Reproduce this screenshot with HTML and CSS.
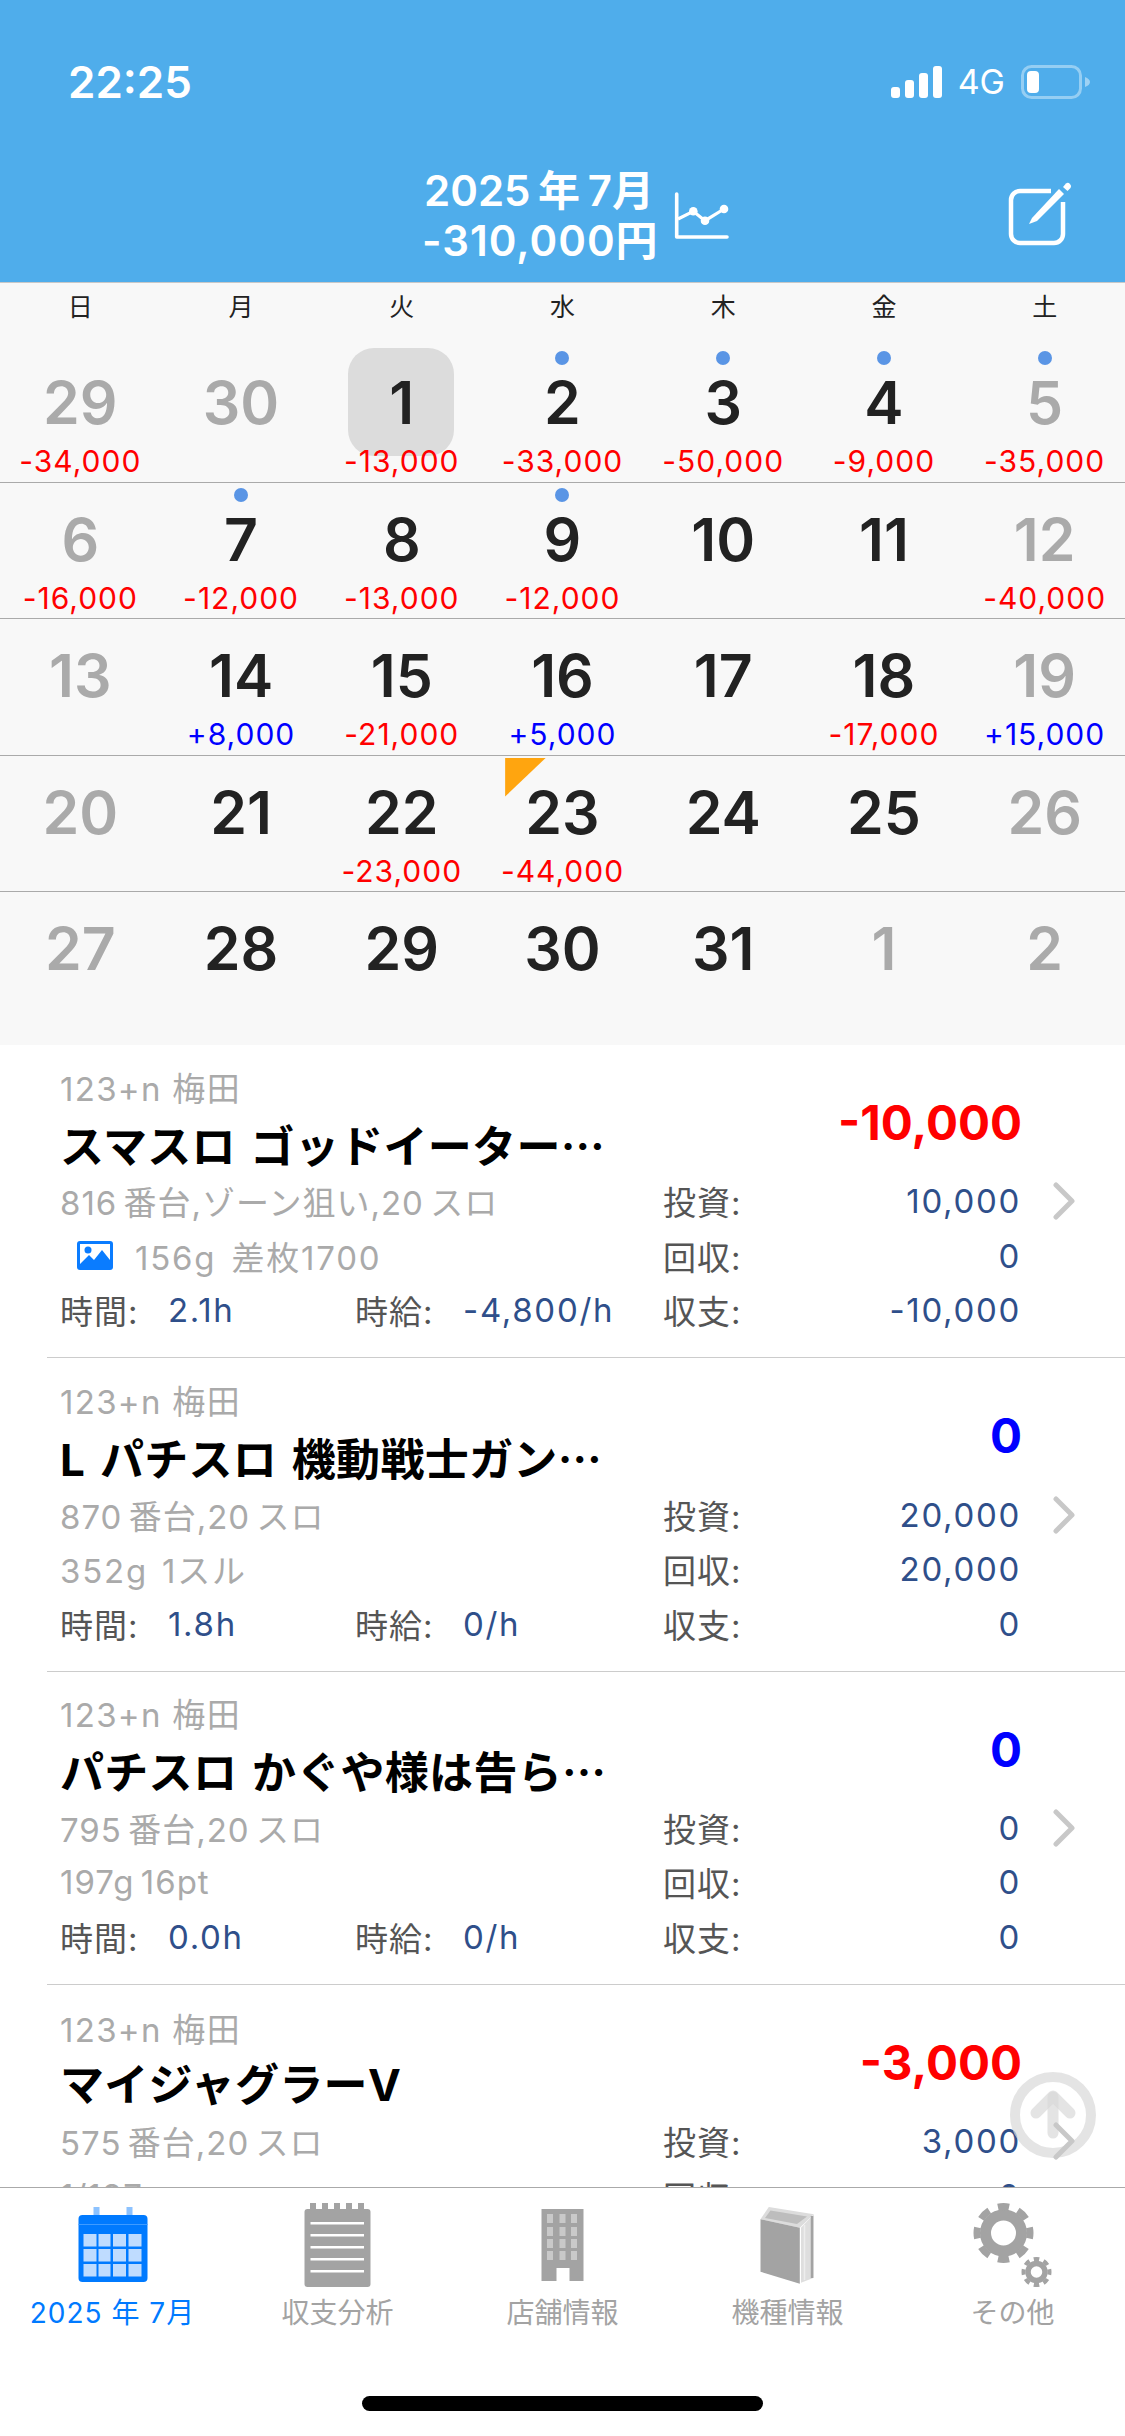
FILE: index.html
```html
<!DOCTYPE html>
<html lang="ja">
<head>
<meta charset="utf-8">
<title>カレンダー</title>
<link rel="stylesheet" href="styles.css">
</head>
<body>
<div class="app">
  <header class="header">
    <div class="status">
      <span class="time">22:25</span>
      <div class="status-right">
        <svg class="signal" width="51" height="32" viewBox="0 0 51 32"><rect x="0" y="21" width="9" height="11" rx="3"/><rect x="14" y="14" width="9" height="18" rx="3"/><rect x="28" y="7" width="9" height="25" rx="3"/><rect x="42" y="0" width="9" height="32" rx="3"/></svg>
        <span class="net">4G</span>
        <svg class="battery" width="70" height="34" viewBox="0 0 70 34"><rect x="1.500" y="1.500" width="58" height="31" rx="9" fill="none" stroke="#fff" stroke-opacity=".4" stroke-width="3"/><rect x="6" y="6" width="12" height="22" rx="4" fill="#fff"/><path d="M64 12c3 1 5 3 5 5s-2 4-5 5z" fill="#fff" fill-opacity=".45"/></svg>
      </div>
    </div>
    <div class="nav">
      <div class="nav-title"><div class="nav-month">2025 年 7月</div><div class="nav-sum">-310,000円</div></div>
      <svg class="chart" width="60" height="52" viewBox="0 0 60 52" fill="none" stroke="#fff"><path d="M4.700 5V48H55" stroke-width="3.600" stroke-linecap="round" stroke-linejoin="round"/><path d="M6 30 21.300 22.300 33 31.700 52 20" stroke-width="3.200"/><g fill="#fff" stroke="none"><circle cx="21.300" cy="22.300" r="4.300"/><circle cx="33" cy="31.700" r="4.300"/><circle cx="52" cy="20" r="4.300"/></g></svg>
      <svg class="edit" width="70" height="70" viewBox="0 0 70 70" fill="none"><path d="M46 13H15a9 9 0 0 0-9 9V56a9 9 0 0 0 9 9H49a9 9 0 0 0 9-9V24" stroke="#fff" stroke-width="4.500"/><path d="M24 46 27 40 54 11 59 16 32 43Z" fill="#fff"/><path d="M58 9 61 5.500Q63 4 65 6 67 8 65.500 10L62.500 13Z" fill="#fff"/></svg>
    </div>
  </header>

  <section class="calendar">
    <div class="weekdays"><span>日</span><span>月</span><span>火</span><span>水</span><span>木</span><span>金</span><span>土</span></div>
    <div class="week">
      <div class="day muted"><i class="dot none"></i><b>29</b><em class="neg">-34,000</em></div>
      <div class="day muted"><i class="dot none"></i><b>30</b><em></em></div>
      <div class="day today"><i class="dot none"></i><b>1</b><em class="neg">-13,000</em></div>
      <div class="day"><i class="dot"></i><b>2</b><em class="neg">-33,000</em></div>
      <div class="day"><i class="dot"></i><b>3</b><em class="neg">-50,000</em></div>
      <div class="day"><i class="dot"></i><b>4</b><em class="neg">-9,000</em></div>
      <div class="day muted"><i class="dot"></i><b>5</b><em class="neg">-35,000</em></div>
    </div>
    <div class="week">
      <div class="day muted"><i class="dot none"></i><b>6</b><em class="neg">-16,000</em></div>
      <div class="day"><i class="dot"></i><b>7</b><em class="neg">-12,000</em></div>
      <div class="day"><i class="dot none"></i><b>8</b><em class="neg">-13,000</em></div>
      <div class="day"><i class="dot"></i><b>9</b><em class="neg">-12,000</em></div>
      <div class="day"><i class="dot none"></i><b>10</b><em></em></div>
      <div class="day"><i class="dot none"></i><b>11</b><em></em></div>
      <div class="day muted"><i class="dot none"></i><b>12</b><em class="neg">-40,000</em></div>
    </div>
    <div class="week">
      <div class="day muted"><i class="dot none"></i><b>13</b><em></em></div>
      <div class="day"><i class="dot none"></i><b>14</b><em class="pos">+8,000</em></div>
      <div class="day"><i class="dot none"></i><b>15</b><em class="neg">-21,000</em></div>
      <div class="day"><i class="dot none"></i><b>16</b><em class="pos">+5,000</em></div>
      <div class="day"><i class="dot none"></i><b>17</b><em></em></div>
      <div class="day"><i class="dot none"></i><b>18</b><em class="neg">-17,000</em></div>
      <div class="day muted"><i class="dot none"></i><b>19</b><em class="pos">+15,000</em></div>
    </div>
    <div class="week">
      <div class="day muted"><i class="dot none"></i><b>20</b><em></em></div>
      <div class="day"><i class="dot none"></i><b>21</b><em></em></div>
      <div class="day"><i class="dot none"></i><b>22</b><em class="neg">-23,000</em></div>
      <div class="day flagged"><i class="dot none"></i><b>23</b><em class="neg">-44,000</em></div>
      <div class="day"><i class="dot none"></i><b>24</b><em></em></div>
      <div class="day"><i class="dot none"></i><b>25</b><em></em></div>
      <div class="day muted"><i class="dot none"></i><b>26</b><em></em></div>
    </div>
    <div class="week last">
      <div class="day muted"><i class="dot none"></i><b>27</b><em></em></div>
      <div class="day"><i class="dot none"></i><b>28</b><em></em></div>
      <div class="day"><i class="dot none"></i><b>29</b><em></em></div>
      <div class="day"><i class="dot none"></i><b>30</b><em></em></div>
      <div class="day"><i class="dot none"></i><b>31</b><em></em></div>
      <div class="day muted"><i class="dot none"></i><b>1</b><em></em></div>
      <div class="day muted"><i class="dot none"></i><b>2</b><em></em></div>
    </div>
  </section>

  <main class="list">
    <article class="row">
      <div class="head">
        <div class="names"><div class="store">123+n 梅田</div><div class="title">スマスロ ゴッドイーター<span class="ell">…</span></div></div>
        <div class="total neg">-10,000</div>
      </div>
      <div class="line"><div class="note">816 番台,ゾーン狙い,20 スロ</div><span class="k">投資:</span><span class="v">10,000</span><svg class="chev" width="24" height="38" viewBox="0 0 24 38" fill="none"><path d="M4 3 20 19 4 35" stroke="#c8c8c8" stroke-width="5" stroke-linecap="round" stroke-linejoin="round"/></svg></div>
      <div class="line"><div class="note with-pic"><svg class="pic" width="36" height="29" viewBox="0 0 36 29"><rect width="36" height="29" rx="3" fill="#0a7cff"/><rect x="3" y="3" width="30" height="20" fill="#fff"/><circle cx="11" cy="9" r="3.500" fill="#0a7cff"/><path d="M3 23 12 14 17 19 25 9 33 19V26H3Z" fill="#0a7cff"/></svg>156g 差枚1700</div><span class="k">回収:</span><span class="v">0</span></div>
      <div class="line"><div class="note meta"><span class="k mk">時間:</span><span class="mv a">2.1h</span><span class="k mk">時給:</span><span class="mv">-4,800/h</span></div><span class="k">収支:</span><span class="v">-10,000</span></div>
    </article>
    <article class="row">
      <div class="head">
        <div class="names"><div class="store">123+n 梅田</div><div class="title">L パチスロ 機動戦士ガン<span class="ell">…</span></div></div>
        <div class="total pos">0</div>
      </div>
      <div class="line"><div class="note">870 番台,20 スロ</div><span class="k">投資:</span><span class="v">20,000</span><svg class="chev" width="24" height="38" viewBox="0 0 24 38" fill="none"><path d="M4 3 20 19 4 35" stroke="#c8c8c8" stroke-width="5" stroke-linecap="round" stroke-linejoin="round"/></svg></div>
      <div class="line"><div class="note spaced">352g 1スル</div><span class="k">回収:</span><span class="v">20,000</span></div>
      <div class="line"><div class="note meta"><span class="k mk">時間:</span><span class="mv a">1.8h</span><span class="k mk">時給:</span><span class="mv">0/h</span></div><span class="k">収支:</span><span class="v">0</span></div>
    </article>
    <article class="row">
      <div class="head">
        <div class="names"><div class="store">123+n 梅田</div><div class="title">パチスロ かぐや様は告ら<span class="ell">…</span></div></div>
        <div class="total pos">0</div>
      </div>
      <div class="line"><div class="note">795 番台,20 スロ</div><span class="k">投資:</span><span class="v">0</span><svg class="chev" width="24" height="38" viewBox="0 0 24 38" fill="none"><path d="M4 3 20 19 4 35" stroke="#c8c8c8" stroke-width="5" stroke-linecap="round" stroke-linejoin="round"/></svg></div>
      <div class="line"><div class="note">197g 16pt</div><span class="k">回収:</span><span class="v">0</span></div>
      <div class="line"><div class="note meta"><span class="k mk">時間:</span><span class="mv a">0.0h</span><span class="k mk">時給:</span><span class="mv">0/h</span></div><span class="k">収支:</span><span class="v">0</span></div>
    </article>
    <article class="row">
      <div class="head">
        <div class="names"><div class="store">123+n 梅田</div><div class="title">マイジャグラーV</div></div>
        <div class="total neg">-3,000</div>
      </div>
      <div class="line"><div class="note">575 番台,20 スロ</div><span class="k">投資:</span><span class="v">3,000</span><svg class="chev" width="24" height="38" viewBox="0 0 24 38" fill="none"><path d="M4 3 20 19 4 35" stroke="#c8c8c8" stroke-width="5" stroke-linecap="round" stroke-linejoin="round"/></svg></div>
      <div class="line"><div class="note">1/187</div><span class="k">回収:</span><span class="v">0</span></div>
    </article>
    <svg class="to-top" width="88" height="88" viewBox="0 0 88 88" fill="none" stroke="#d8d8d8" stroke-opacity=".7" stroke-linecap="round" stroke-linejoin="round"><circle cx="44" cy="44" r="38" stroke-width="10"/><path d="M44 62V26" stroke-width="11"/><path d="M27 42 44 25 61 42" stroke-width="11"/></svg>
  </main>

  <nav class="tabs">
    <div class="tab active">
      <svg width="90" height="90" viewBox="0 0 90 90"><rect x="25.500" y="6" width="6" height="12" fill="#8cc2ff"/><rect x="58.500" y="6" width="6" height="12" fill="#8cc2ff"/><rect x="10.500" y="14" width="69" height="67" rx="4" fill="#007aff"/><rect x="10.500" y="23" width="69" height="1" fill="#3f9bff"/><g fill="#bfdcff"><rect x="15.500" y="33" width="13" height="12.500"/><rect x="30.500" y="33" width="12" height="12.500"/><rect x="45" y="33" width="13" height="12.500"/><rect x="60.500" y="33" width="13" height="12.500"/><rect x="15.500" y="48" width="13" height="12.500"/><rect x="30.500" y="48" width="12" height="12.500"/><rect x="45" y="48" width="13" height="12.500"/><rect x="60.500" y="48" width="13" height="12.500"/><rect x="15.500" y="63" width="13" height="12.500"/><rect x="30.500" y="63" width="12" height="12.500"/><rect x="45" y="63" width="13" height="12.500"/><rect x="60.500" y="63" width="13" height="12.500"/></g></svg>
      <span>2025 年 7月</span>
    </div>
    <div class="tab">
      <svg width="90" height="90" viewBox="0 0 90 90"><g fill="#a3a3a3"><rect x="17" y="2" width="6" height="8"/><rect x="29" y="2" width="6" height="8"/><rect x="41" y="2" width="6" height="8"/><rect x="53" y="2" width="6" height="8"/><rect x="65" y="2" width="6" height="8"/><rect x="11.500" y="8" width="66" height="78" rx="3"/></g><g fill="#fff"><rect x="17.500" y="21" width="53.500" height="2.500"/><rect x="17.500" y="33" width="53.500" height="2.500"/><rect x="17.500" y="45" width="53.500" height="2.500"/><rect x="17.500" y="57" width="53.500" height="2.500"/><rect x="17.500" y="69" width="53.500" height="2.500"/></g></svg>
      <span>収支分析</span>
    </div>
    <div class="tab">
      <svg width="90" height="90" viewBox="0 0 90 90"><rect x="23.500" y="8" width="42" height="72" fill="#a3a3a3"/><g fill="#c9c9c9"><rect x="29" y="13" width="6" height="9"/><rect x="41.500" y="13" width="6" height="9"/><rect x="53" y="13" width="6" height="9"/><rect x="29" y="26" width="6" height="9"/><rect x="41.500" y="26" width="6" height="9"/><rect x="53" y="26" width="6" height="9"/><rect x="29" y="38" width="6" height="9"/><rect x="41.500" y="38" width="6" height="9"/><rect x="53" y="38" width="6" height="9"/><rect x="29" y="50" width="6" height="9"/><rect x="41.500" y="50" width="6" height="9"/><rect x="53" y="50" width="6" height="9"/></g><rect x="38.500" y="67" width="13" height="13" fill="#fff"/></svg>
      <span>店舗情報</span>
    </div>
    <div class="tab">
      <svg width="90" height="90" viewBox="0 0 90 90"><path d="M17.500 18.300 25.800 6 70.800 13.300 56.800 26.700Z" fill="#dcdcdc"/><path d="M22 17 27.500 9.500 64 15.500 54 23Z" fill="#bdbdbd"/><path d="M17.500 18.300 56.800 26.700V82.700L17.500 70.700Z" fill="#a3a3a3"/><path d="M58 26.700 70.800 13.300V76.700L58 81.700Z" fill="#dedede"/><path d="M69 15V77" stroke="#a3a3a3" stroke-width="2.500"/><path d="M61.500 24V79" stroke="#ededed" stroke-width="1.500"/></svg>
      <span>機種情報</span>
    </div>
    <div class="tab">
      <svg width="90" height="90" viewBox="0 0 90 90" fill="none" stroke="#a3a3a3"><circle cx="35.500" cy="32" r="18" stroke-width="11"/><circle cx="35.500" cy="32" r="26.500" stroke-width="7" pathLength="80" stroke-dasharray="5.500 4.500" stroke-dashoffset="2.750"/><circle cx="68.500" cy="71" r="8.500" stroke-width="5.500"/><circle cx="68.500" cy="71" r="13" stroke-width="4" pathLength="80" stroke-dasharray="5.500 4.500" stroke-dashoffset="2.750"/></svg>
      <span>その他</span>
    </div>
  </nav>
  <div class="home-bar"><div class="home"></div></div>
</div>
</body>
</html>
```
FILE: styles.css
```css
* { box-sizing: border-box; }
html, body { margin: 0; padding: 0; background: #fff; }
body { font-family: Inter, "Noto Sans CJK JP", sans-serif; }
.app { width: 1125px; height: 2436px; display: flex; flex-direction: column; overflow: hidden; }

.header { height: 283px; flex: none; background: #4fadeb; border-bottom: 1px solid #c8c8c8; color: #fff; }
.status { height: 164px; padding: 65px 34px 0 68px; display: flex; justify-content: space-between; align-items: flex-start; }
.time { font-size: 44px; line-height: 34px; font-weight: 600; }
.status-right { display: flex; align-items: center; height: 34px; }
.signal { fill: #fff; }
.net { font-size: 34px; font-weight: 400; line-height: 34px; margin-left: 16px; margin-right: 16px; }
.nav { display: flex; align-items: flex-start; padding-left: 422px; height: 118px; position: relative; top: -1px; }
.nav-title { width: 234px; text-align: center; font-size: 42px; font-weight: 600; line-height: 50px; margin-top: 3px; white-space: nowrap; }
.nav-month { word-spacing: -3px; }
.nav-sum { letter-spacing: 1px; }
.chart { margin-left: 16px; margin-top: 26px; }
.edit { margin-left: auto; margin-right: 50px; margin-top: 15px; }

.calendar { height: 762px; flex: none; background: #f8f8f8; display: flex; flex-direction: column; }
.weekdays { height: 63px; display: grid; grid-template-columns: repeat(7, 1fr); padding-top: 7px; font-size: 25px; line-height: 34px; color: #222; text-align: center; }
.week { height: 136.500px; display: grid; grid-template-columns: repeat(7, 1fr); border-bottom: 1px solid #aaa; }
.week.last { border-bottom: 0; flex: 1; }
.day { position: relative; display: flex; flex-direction: column; align-items: center; padding-top: 5px; color: #222; }
.day.muted { color: #aaa; }
.dot { width: 14px; height: 14px; border-radius: 50%; background: #5a95e5; flex: none; }
.dot.none { background: transparent; }
.day b { position: relative; font-size: 59px; line-height: 56px; font-weight: 600; margin-top: 10px; }
.day em { position: relative; height: 36px; font-style: normal; font-size: 30px; letter-spacing: 1px; line-height: 36px; margin-top: 12px; white-space: nowrap; }
.today::before { content: ""; position: absolute; left: 27px; top: 2px; width: 106px; height: 108px; background: #dcdcdc; border-radius: 26px; }
.flagged::before { content: ""; position: absolute; left: 23px; top: 2px; width: 41px; height: 39px; background: #ffa50f; clip-path: polygon(0 0, 100% 0, 0 100%); }
.neg { color: #f00; }
.pos { color: #00f; }

.list { flex: 1; min-height: 0; overflow: hidden; position: relative; background: #fff; }
.row { height: 313.300px; margin-left: 47px; padding: 25px 0 0 13px; border-bottom: 1px solid #ccc; }
.head { display: flex; justify-content: space-between; align-items: center; height: 104px; }
.store { font-size: 33px; letter-spacing: 1.300px; line-height: 40px; color: #aaa; white-space: nowrap; }
.title { font-size: 44px; line-height: 58px; font-weight: 700; color: #000; margin-top: 6px; white-space: nowrap; letter-spacing: .3px; word-spacing: 4px; }
.ell { font-family: "Noto Sans CJK JP", sans-serif; }
.total { font-size: 47.500px; font-weight: 700; line-height: 60px; margin-right: 103px; margin-top: 2px; }
.line { display: flex; align-items: center; height: 54.500px; font-size: 33px; white-space: nowrap; }
.note { width: 603px; color: #aaa; display: flex; align-items: center; font-size: 33px; letter-spacing: 1px; word-spacing: -4px; white-space: pre; }
.note.with-pic { word-spacing: 4px; letter-spacing: 1.800px; }
.note.spaced { word-spacing: 3px; letter-spacing: 1.800px; }
.pic { margin-left: 17px; margin-right: 22px; }
.meta { word-spacing: 0; }
.meta .mk { width: 108px; }
.mv { color: #2f4f8a; font-size: 33px; letter-spacing: 1.700px; }
.mv.a { width: 187px; }
.k { color: #555; width: 90px; font-size: 33px; letter-spacing: 1px; }
.v { color: #2f4f8a; width: 268px; text-align: right; letter-spacing: 1.700px; }
.chev { margin-left: 31px; position: relative; z-index: 1; }
.to-top { position: absolute; left: 1009px; top: 1026px; }

.tabs { flex: none; height: 148px; background: #fff; border-top: 1px solid #aaa; display: flex; padding-top: 13px; position: relative; }
.tab { width: 225px; display: flex; flex-direction: column; align-items: center; color: #a3a3a3; font-size: 28px; line-height: 34px; white-space: nowrap; }
.tab svg { display: block; flex: none; margin-bottom: 5px; }
.tab.active { color: #007aff; letter-spacing: 1px; }
.home-bar { flex: none; height: 101px; background: #fff; padding-top: 61px; display: flex; justify-content: center; }
.home { width: 401px; height: 15px; border-radius: 8px; background: #000; }
```
